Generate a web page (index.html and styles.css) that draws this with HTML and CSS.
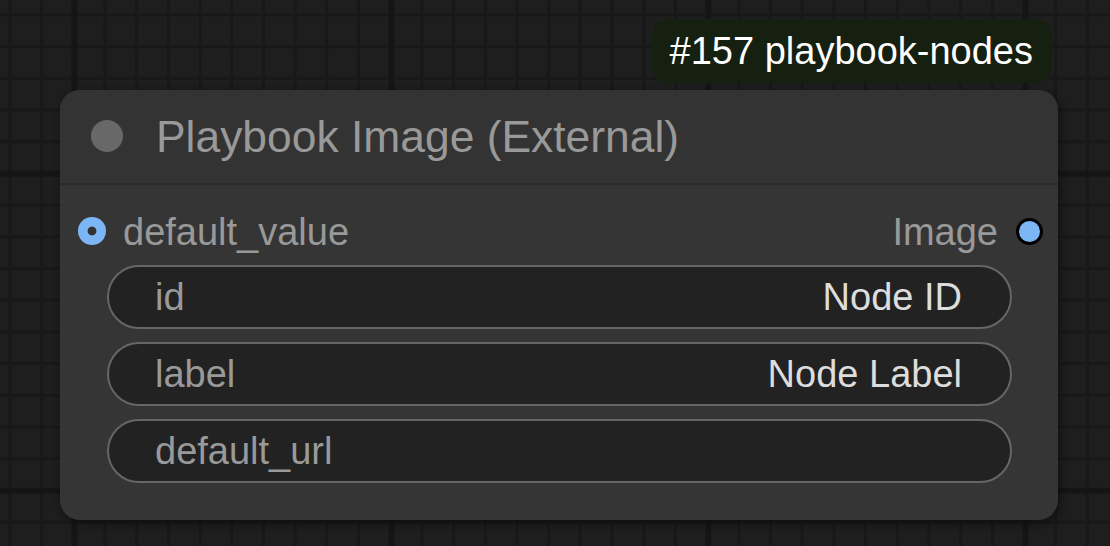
FILE: index.html
```html
<!DOCTYPE html>
<html>
<head>
<meta charset="utf-8">
<link rel="stylesheet" href="styles.css">
</head>
<body>
<div class="canvas">
  <div class="node">
    <div class="badge">#157 playbook-nodes</div>
    <div class="title">
      <span class="title-dot"></span>
      <span class="title-text">Playbook Image (External)</span>
    </div>
    <div class="body">
      <div class="slots">
        <div class="slot-in">
          <span class="dot-in"></span>
          <span class="slot-label">default_value</span>
        </div>
        <div class="slot-out">
          <span class="slot-label">Image</span>
          <span class="dot-out"></span>
        </div>
      </div>
      <div class="widgets">
        <div class="widget"><span class="w-label">id</span><span class="w-value">Node ID</span></div>
        <div class="widget"><span class="w-label">label</span><span class="w-value">Node Label</span></div>
        <div class="widget"><span class="w-label">default_url</span><span class="w-value"></span></div>
      </div>
    </div>
  </div>
</div>
</body>
</html>
```

FILE: styles.css
```css
html, body {
  margin: 0;
  padding: 0;
  width: 1110px;
  height: 546px;
  overflow: hidden;
}

.canvas {
  position: relative;
  width: 1110px;
  height: 546px;
  background-color: #1e1e1e;
  background-image:
    linear-gradient(to right, #151515 6px, transparent 6px),
    linear-gradient(to bottom, #151515 6px, transparent 6px),
    linear-gradient(to right, #181818 3px, transparent 3px),
    linear-gradient(to bottom, #181818 3px, transparent 3px);
  background-size: 317px 317px, 317px 317px, 31.7px 31.7px, 31.7px 31.7px;
  background-position: 71.5px 0, 0 170.7px, 8.5px 0, 0 13.5px;
  font-family: "Liberation Sans", Arial, sans-serif;
}

.node {
  position: absolute;
  left: 60px;
  top: 90px;
  width: 998px;
  height: 430px;
  background: #353535;
  border-radius: 20px;
  box-shadow: 2px 3px 10px rgba(0, 0, 0, 0.45);
  display: flex;
  flex-direction: column;
}

.badge {
  position: absolute;
  right: 6px;
  top: -71px;
  height: 64px;
  padding: 0 19px 0 18px;
  background: #152010;
  border-radius: 16px;
  color: #ffffff;
  font-size: 38px;
  display: flex;
  align-items: center;
  white-space: nowrap;
}

.title {
  height: 95px;
  box-sizing: border-box;
  background: #333333;
  border-radius: 20px 20px 0 0;
  border-bottom: 2px solid #2a2a2a;
  display: flex;
  align-items: center;
  padding-left: 31px;
  gap: 33px;
}

.title-dot {
  width: 32px;
  height: 32px;
  border-radius: 50%;
  background: #686868;
  flex: none;
  margin-top: -1px;
}

.title-text {
  color: #999999;
  font-size: 44.4px;
  white-space: nowrap;
  margin-top: 0;
}

.body {
  padding-top: 15px;
  display: flex;
  flex-direction: column;
}

.slots {
  height: 62px;
  display: flex;
  justify-content: space-between;
  align-items: center;
}

.slot-in, .slot-out {
  display: flex;
  align-items: center;
}

.slot-in {
  padding-left: 18px;
  gap: 17px;
}

.slot-out {
  padding-right: 15px;
  gap: 18px;
}

.slot-label {
  color: #999999;
  font-size: 38px;
  white-space: nowrap;
  margin-top: 2px;
}

.dot-in {
  width: 28px;
  height: 28px;
  border-radius: 50%;
  background: radial-gradient(circle, #333333 4px, #7cb6f4 4.8px);
  flex: none;
}

.dot-out {
  width: 21px;
  height: 21px;
  border-radius: 50%;
  background: #7cb6f4;
  border: 3px solid #000000;
  flex: none;
}

.widgets {
  margin-top: 3px;
  padding: 0 46px 0 47px;
  display: flex;
  flex-direction: column;
  gap: 13px;
}

.widget {
  height: 64px;
  box-sizing: border-box;
  border: 2px solid #666666;
  border-radius: 32px;
  background: #222222;
  display: flex;
  align-items: center;
  justify-content: space-between;
  padding: 0 48px 0 46px;
  font-size: 38px;
}

.w-label {
  color: #999999;
}

.w-value {
  color: #dddddd;
}
```
